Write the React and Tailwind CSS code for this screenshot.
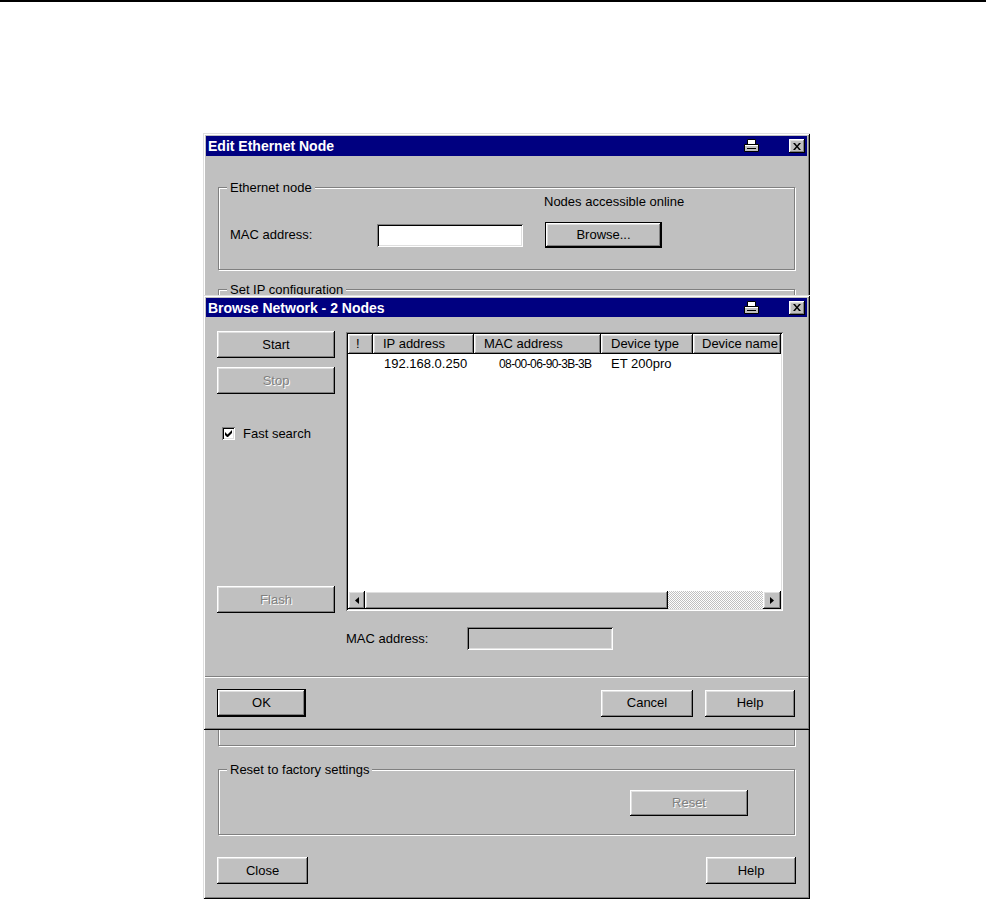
import React from "react";

const RAISED =
  "shadow-[inset_-1px_-1px_0_#000,inset_1px_1px_0_#fff,inset_-2px_-2px_0_#808080,inset_2px_2px_0_#dfdfdf]";
const SUNKEN =
  "shadow-[inset_1px_1px_0_#808080,inset_-1px_-1px_0_#fff,inset_2px_2px_0_#000,inset_-2px_-2px_0_#dfdfdf]";
const WINDOW =
  "shadow-[inset_1px_1px_0_#dfdfdf,inset_-1px_-1px_0_#000,inset_2px_2px_0_#fff,inset_-2px_-2px_0_#808080]";
const DISABLED = "text-[#808080] [text-shadow:1px_1px_0_#fff]";

function Btn({ children, className = "", disabled = false, isDefault = false }) {
  const inner = (
    <div
      className={
        "w-full h-full bg-[#c0c0c0] flex items-center justify-center whitespace-nowrap " +
        RAISED +
        (disabled ? " " + DISABLED : "")
      }
    >
      {children}
    </div>
  );
  if (isDefault) {
    return <div className={"border border-black " + className}>{inner}</div>;
  }
  return <div className={className}>{inner}</div>;
}

function PrinterIcon() {
  return (
    <svg width="17" height="14" viewBox="0 0 17 14">
      <path d="M4.5 0.5h8v5h-8z" fill="#fff" stroke="#000" />
      <path d="M1.5 5.5h14v7h-14z" fill="#c0c0c0" stroke="#000" />
      <path d="M2 6.5h13" stroke="#fff" />
      <path d="M4 9.5h9" stroke="#000" />
    </svg>
  );
}

function CloseBox() {
  return (
    <div className={"w-[16px] h-[14px] bg-[#c0c0c0] flex items-center justify-center " + RAISED}>
      <svg width="8" height="7" viewBox="0 0 8 7">
        <path d="M0 0h2l2 2.5L6 0h2L5 3.5 8 7H6L4 4.5 2 7H0l3-3.5z" fill="#000" />
      </svg>
    </div>
  );
}

function TitleBar({ title, h }) {
  return (
    <div
      className={
        "mx-[3px] mt-[3px] bg-[#000080] text-white font-bold text-[14px] flex items-center pl-[2px] pr-[2px] " + h
      }
    >
      <span className="flex-1 leading-none whitespace-nowrap">{title}</span>
      <PrinterIcon />
      <div className="w-[29px]" />
      <CloseBox />
    </div>
  );
}

function Group({ label, className = "", children }) {
  return (
    <div
      className={
        "relative border border-[#808080] shadow-[inset_1px_1px_0_#fff,1px_1px_0_#fff] " + className
      }
    >
      <span className="absolute left-[8px] top-[-8px] bg-[#c0c0c0] px-[3px] leading-[16px] whitespace-nowrap">
        {label}
      </span>
      {children}
    </div>
  );
}

function Arrow({ dir }) {
  return (
    <svg width="4" height="7" viewBox="0 0 4 7">
      {dir === "left" ? <path d="M4 0v7L0 3.5z" fill="#000" /> : <path d="M0 0v7l4-3.5z" fill="#000" />}
    </svg>
  );
}

export default function App() {
  return (
    <div className="w-[999px] h-[900px] bg-white overflow-hidden font-['Liberation_Sans',Arial,sans-serif] text-[13px] text-black">
      <div className="h-[2px] w-[986px] bg-black" />
      <div className="relative ml-[203px] mt-[131px] w-[607px]">
        {/* Edit Ethernet Node window */}
        <div className={"w-[607px] h-[766px] bg-[#c0c0c0] flex flex-col " + WINDOW}>
          <TitleBar title="Edit Ethernet Node" h="h-[20px]" />
          <div className="px-[15px]">
            <Group label="Ethernet node" className="mt-[31px] h-[83px]">
              <div className="pt-[6px] pl-[325px] h-[22px] leading-[16px] whitespace-nowrap">
                Nodes accessible online
              </div>
              <div className="mt-[12px] h-[26px] flex items-center pl-[11px]">
                <span className="w-[147px] whitespace-nowrap">MAC address:</span>
                <div className={"w-[146px] h-[23px] bg-white " + SUNKEN} />
                <Btn className="ml-[22px] w-[117px] h-[26px]" isDefault>
                  Browse...
                </Btn>
              </div>
            </Group>
            <Group label="Set IP configuration" className="mt-[19px] h-[457px]" />
            <Group label="Reset to factory settings" className="mt-[23px] h-[66px]">
              <div className="pt-[20px] pl-[411px]">
                <Btn className="w-[118px] h-[26px]" disabled>
                  Reset
                </Btn>
              </div>
            </Group>
          </div>
          <div className="mt-[22px] px-[14px] flex justify-between">
            <Btn className="w-[91px] h-[27px]">Close</Btn>
            <Btn className="w-[90px] h-[27px]">Help</Btn>
          </div>
        </div>

        {/* Browse Network window (overlapping dialog) */}
        <div
          className={"absolute left-0 top-[162px] w-[607px] h-[435px] bg-[#c0c0c0] flex flex-col " + WINDOW}
        >
          <TitleBar title="Browse Network - 2 Nodes" h="h-[19px]" />
          <div className="mt-[14px] flex items-start pl-[14px]">
            <div className="w-[118px] h-[282px] flex flex-col">
              <Btn className="w-[118px] h-[27px]">Start</Btn>
              <Btn className="mt-[9px] w-[118px] h-[27px]" disabled>
                Stop
              </Btn>
              <div className="mt-[33px] ml-[5px] flex items-center h-[13px]">
                <div className={"w-[13px] h-[13px] bg-white flex items-center justify-center " + SUNKEN}>
                  <svg width="7" height="7" viewBox="0 0 7 7">
                    <path d="M0 2v3l2 2h1l4-4V0L2.5 4.5z" fill="#000" />
                  </svg>
                </div>
                <span className="ml-[8px] leading-[16px] whitespace-nowrap">Fast search</span>
              </div>
              <Btn className="mt-auto w-[118px] h-[27px]" disabled>
                Flash
              </Btn>
            </div>

            <div className={"ml-[11px] mt-[1px] w-[437px] h-[279px] bg-white p-[2px] flex flex-col " + SUNKEN}>
              <div className="flex h-[20px] shrink-0 whitespace-nowrap">
                <div className={"w-[25px] bg-[#c0c0c0] pl-[8px] flex items-center " + RAISED}>!</div>
                <div className={"w-[101px] bg-[#c0c0c0] pl-[10px] flex items-center " + RAISED}>IP address</div>
                <div className={"w-[127px] bg-[#c0c0c0] pl-[10px] flex items-center " + RAISED}>MAC address</div>
                <div className={"w-[92px] bg-[#c0c0c0] pl-[10px] flex items-center " + RAISED}>Device type</div>
                <div className={"w-[88px] bg-[#c0c0c0] pl-[9px] flex items-center overflow-hidden " + RAISED}>
                  Device name
                </div>
              </div>
              <div className="flex-1">
                <div className="flex h-[20px] items-center whitespace-nowrap">
                  <div className="w-[25px]" />
                  <div className="w-[101px] pl-[11px]">192.168.0.250</div>
                  <div className="w-[127px] pl-[25px] text-[12px] tracking-[-0.6px]">08-00-06-90-3B-3B</div>
                  <div className="w-[92px] pl-[10px]">ET 200pro</div>
                </div>
              </div>
              <div className="flex h-[18px] shrink-0">
                <div className={"w-[17px] bg-[#c0c0c0] flex items-center justify-center " + RAISED}>
                  <Arrow dir="left" />
                </div>
                <div className={"w-[303px] bg-[#c0c0c0] " + RAISED} />
                <div className="flex-1 bg-[repeating-conic-gradient(#c0c0c0_0%_25%,#fff_0%_50%)] bg-[length:2px_2px]" />
                <div className={"w-[18px] bg-[#c0c0c0] flex items-center justify-center " + RAISED}>
                  <Arrow dir="right" />
                </div>
              </div>
            </div>
          </div>

          <div className="mt-[14px] h-[23px] flex items-center pl-[143px]">
            <span className="w-[121px] whitespace-nowrap">MAC address:</span>
            <div className={"w-[146px] h-[23px] " + SUNKEN} />
          </div>

          <div className="mt-[26px] mx-[2px] h-[2px] border-t border-[#808080] border-b border-b-white" />

          <div className="mt-[11px] flex items-center pl-[14px] pr-[15px]">
            <Btn className="w-[89px] h-[28px]" isDefault>
              OK
            </Btn>
            <Btn className="ml-auto w-[92px] h-[27px]">Cancel</Btn>
            <Btn className="ml-[12px] w-[90px] h-[27px]">Help</Btn>
          </div>
        </div>
      </div>
    </div>
  );
}
